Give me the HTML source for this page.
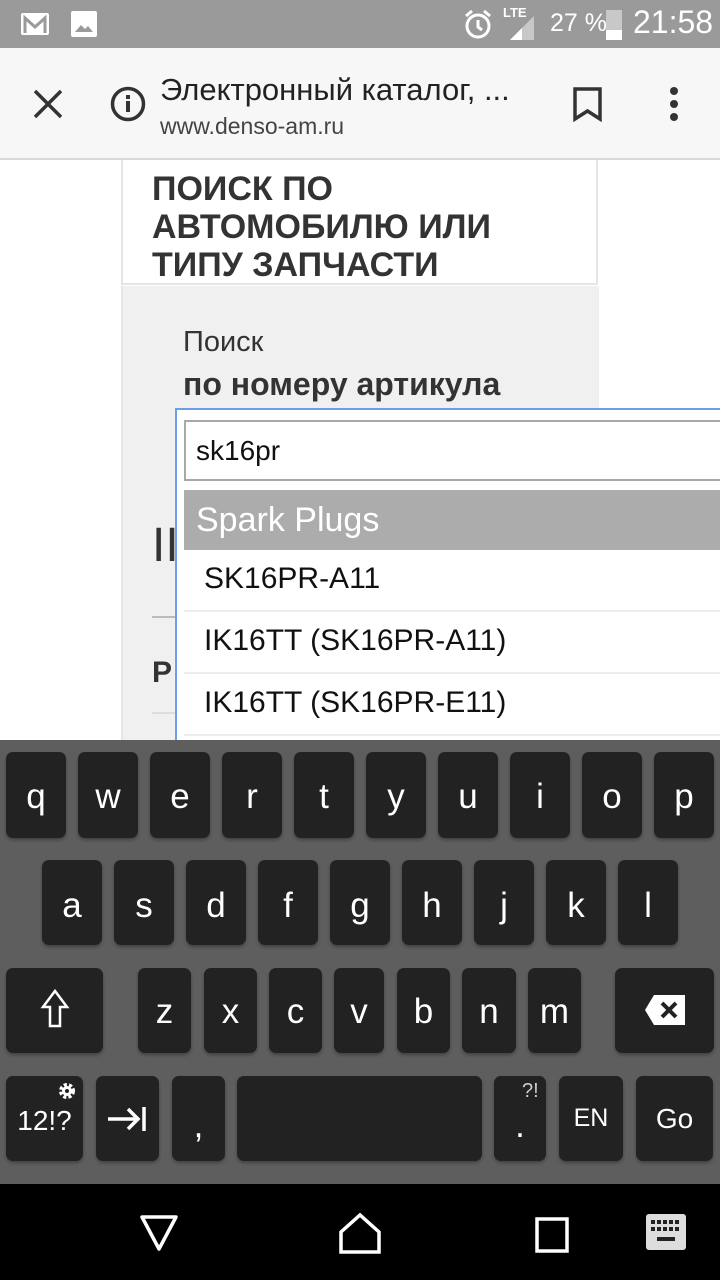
<!DOCTYPE html>
<html><head><meta charset="utf-8"><style>
*{margin:0;padding:0;box-sizing:border-box}
body{width:720px;height:1280px;position:relative;overflow:hidden;background:#fff;font-family:"Liberation Sans","DejaVu Sans",sans-serif}
.a{position:absolute}
.k{position:absolute;background:#222;border-radius:7px;color:#fff;font-size:35px;text-align:center;box-shadow:0 2px 3px rgba(0,0,0,.3)}
.r1{top:752px;height:86px;line-height:90px;width:60px}
.r2{top:860px;height:85px;line-height:92px;width:60px}
.r3{top:968px;height:85px;line-height:88px}
.r4{top:1076px;height:85px;line-height:85px}
.item{position:absolute;left:184px;width:536px;height:62px;border-bottom:2px solid #ececec;font-size:30px;color:#111;padding-left:20px;line-height:58px}
</style></head><body>
<!-- status bar -->
<div class="a" style="left:0;top:0;width:720px;height:48px;background:#9a9a9a"></div>
<svg class="a" style="left:20px;top:12px" width="32" height="26"><rect x="1" y="1" width="28" height="22" rx="2" fill="#fff"/><path d="M5 21V6l10 9 10-9v15" stroke="#9a9a9a" stroke-width="3" fill="none"/></svg>
<svg class="a" style="left:70px;top:10px" width="28" height="28"><rect x="1" y="1" width="26" height="26" rx="2" fill="#fff"/><path d="M5 22l6-7 4 4 3-3 5 6z" fill="#9a9a9a"/></svg>
<svg class="a" style="left:462px;top:8px" width="32" height="32"><circle cx="16" cy="18" r="11" stroke="#fff" stroke-width="3" fill="none"/><path d="M16 12v7l4 3M4 8l6-5M28 8l-6-5" stroke="#fff" stroke-width="3" fill="none"/></svg>
<div class="a" style="left:503px;top:5px;color:#fff;font-size:13px;font-weight:bold">LTE</div>
<svg class="a" style="left:508px;top:14px" width="32" height="28"><path d="M2 26L26 2v24z" fill="#c8c8c8"/><path d="M2 26L14 14v12z" fill="#fff"/></svg>
<div class="a" style="left:550px;top:9px;color:#fff;font-size:25px">27 %</div>
<div class="a" style="left:606px;top:10px;width:16px;height:30px;background:#c8c8c8"></div>
<div class="a" style="left:606px;top:30px;width:16px;height:10px;background:#fff"></div>
<div class="a" style="left:633px;top:4px;color:#fff;font-size:32px">21:58</div>
<!-- toolbar -->
<div class="a" style="left:0;top:48px;width:720px;height:112px;background:#f7f7f7;border-bottom:2px solid #d8d8d8"></div>
<svg class="a" style="left:32px;top:88px" width="32" height="32"><path d="M3 3l26 26M29 3L3 29" stroke="#333" stroke-width="3.5"/></svg>
<svg class="a" style="left:110px;top:86px" width="36" height="36"><circle cx="18" cy="18" r="15.5" stroke="#333" stroke-width="3.5" fill="none"/><rect x="16" y="15" width="4" height="11" fill="#333"/><rect x="16" y="9" width="4" height="4" fill="#333"/></svg>
<div class="a" style="left:160px;top:72px;font-size:31px;color:#222">Электронный каталог, ...</div>
<div class="a" style="left:160px;top:113px;font-size:23px;color:#444">www.denso-am.ru</div>
<svg class="a" style="left:572px;top:86px" width="32" height="36"><path d="M3 3h25v30l-12.5-8L3 33z" stroke="#333" stroke-width="3.5" fill="none"/></svg>
<svg class="a" style="left:664px;top:86px" width="20" height="36"><circle cx="10" cy="5" r="4" fill="#333"/><circle cx="10" cy="18" r="4" fill="#333"/><circle cx="10" cy="31" r="4" fill="#333"/></svg>
<!-- page -->
<div class="a" style="left:121px;top:160px;width:477px;height:125px;border:2px solid #e6e6e6;border-top:none;background:#fff"></div>
<div class="a" style="left:152px;top:170px;font-size:34px;font-weight:bold;color:#333;line-height:38px">ПОИСК ПО<br>АВТОМОБИЛЮ ИЛИ<br>ТИПУ ЗАПЧАСТИ</div>
<div class="a" style="left:121px;top:286px;width:478px;height:460px;background:#f0f0f0;border-left:2px solid #e6e6e6"></div>
<div class="a" style="left:183px;top:326px;font-size:29px;color:#333">Поиск</div>
<div class="a" style="left:183px;top:366px;font-size:32px;font-weight:bold;color:#333">по номеру артикула</div>
<div class="a" style="left:152px;top:518px;font-size:48px;color:#333">II</div>
<div class="a" style="left:152px;top:616px;width:30px;height:2px;background:#bbb"></div>
<div class="a" style="left:152px;top:656px;font-size:30px;font-weight:bold;color:#333">P</div>
<div class="a" style="left:152px;top:712px;width:30px;height:2px;background:#ddd"></div>
<!-- dropdown -->
<div class="a" style="left:175px;top:408px;width:545px;height:340px;background:#fff;border:2px solid #6d9eeb;border-right:none"></div>
<div class="a" style="left:184px;top:420px;width:536px;height:61px;border:2px solid #a8a8a8;border-right:none;font-size:28px;color:#111;padding-left:10px;line-height:58px">sk16pr</div>
<div class="a" style="left:184px;top:490px;width:536px;height:60px;background:#acacac;color:#fff;font-size:34px;padding-left:12px;line-height:60px">Spark Plugs</div>
<div class="item" style="top:550px">SK16PR-A11</div>
<div class="item" style="top:612px">IK16TT (SK16PR-A11)</div>
<div class="item" style="top:674px">IK16TT (SK16PR-E11)</div>
<!-- keyboard -->
<div class="a" style="left:0;top:740px;width:720px;height:444px;background:#5e5e5e"></div>
<div class="k r1" style="left:6px">q</div><div class="k r1" style="left:78px">w</div><div class="k r1" style="left:150px">e</div><div class="k r1" style="left:222px">r</div><div class="k r1" style="left:294px">t</div><div class="k r1" style="left:366px">y</div><div class="k r1" style="left:438px">u</div><div class="k r1" style="left:510px">i</div><div class="k r1" style="left:582px">o</div><div class="k r1" style="left:654px">p</div>
<div class="k r2" style="left:42px">a</div><div class="k r2" style="left:114px">s</div><div class="k r2" style="left:186px">d</div><div class="k r2" style="left:258px">f</div><div class="k r2" style="left:330px">g</div><div class="k r2" style="left:402px">h</div><div class="k r2" style="left:474px">j</div><div class="k r2" style="left:546px">k</div><div class="k r2" style="left:618px">l</div>
<div class="k r3" style="left:6px;width:97px"><svg width="32" height="44" style="margin-top:20px"><path d="M16 3L4 19h7v19h10V19h7z" stroke="#fff" stroke-width="2.5" fill="none"/></svg></div>
<div class="k r3" style="left:138px;width:53px">z</div><div class="k r3" style="left:204px;width:53px">x</div><div class="k r3" style="left:269px;width:53px">c</div><div class="k r3" style="left:334px;width:50px">v</div><div class="k r3" style="left:397px;width:53px">b</div><div class="k r3" style="left:462px;width:54px">n</div><div class="k r3" style="left:528px;width:53px">m</div>
<div class="k r3" style="left:615px;width:99px"><svg width="42" height="32" style="margin-top:26px"><path d="M10 1h31v30H10L1 16z" fill="#fff"/><path d="M18 9l14 14M32 9L18 23" stroke="#222" stroke-width="4"/></svg></div>
<div class="k r4" style="left:6px;width:77px;font-size:28px;line-height:90px">12!?</div>
<svg class="a" style="left:56px;top:1080px" width="22" height="22"><circle cx="11" cy="11" r="6" stroke="#fff" stroke-width="4" fill="none" stroke-dasharray="3 2"/><circle cx="11" cy="11" r="5" fill="#fff"/><circle cx="11" cy="11" r="2" fill="#222"/></svg>
<div class="k r4" style="left:96px;width:63px"><svg width="44" height="30" style="margin-top:28px"><path d="M2 15h30M22 5l10 10-10 10M38 3v24" stroke="#fff" stroke-width="3.5" fill="none"/></svg></div>
<div class="k r4" style="left:172px;width:53px;line-height:100px">,</div>
<div class="k r4" style="left:237px;width:245px"></div>
<div class="k r4" style="left:494px;width:52px;line-height:100px">.</div>
<div class="a" style="left:522px;top:1080px;color:#ccc;font-size:20px">?!</div>
<div class="k r4" style="left:559px;width:64px;font-size:25px">EN</div>
<div class="k r4" style="left:636px;width:77px;font-size:28px">Go</div>
<!-- nav -->
<div class="a" style="left:0;top:1184px;width:720px;height:96px;background:#000"></div>
<svg class="a" style="left:139px;top:1212px" width="40" height="40"><path d="M3 5h34L20 37z" stroke="#fff" stroke-width="3.5" fill="none" stroke-linejoin="round"/></svg>
<svg class="a" style="left:339px;top:1212px" width="42" height="44"><path d="M2 40V20L21 3l19 17v20z" stroke="#fff" stroke-width="3.5" fill="none"/></svg>
<svg class="a" style="left:535px;top:1215px" width="36" height="40"><rect x="2" y="4" width="30" height="32" stroke="#fff" stroke-width="3.5" fill="none"/></svg>
<svg class="a" style="left:646px;top:1214px" width="42" height="38"><rect x="0" y="0" width="40" height="36" rx="3" fill="#ddd"/><g fill="#222"><rect x="5" y="6" width="4" height="4"/><rect x="11" y="6" width="4" height="4"/><rect x="17" y="6" width="4" height="4"/><rect x="23" y="6" width="4" height="4"/><rect x="29" y="6" width="4" height="4"/><rect x="5" y="13" width="4" height="4"/><rect x="11" y="13" width="4" height="4"/><rect x="17" y="13" width="4" height="4"/><rect x="23" y="13" width="4" height="4"/><rect x="29" y="13" width="4" height="4"/><rect x="11" y="23" width="18" height="4"/></g></svg>
</body></html>
